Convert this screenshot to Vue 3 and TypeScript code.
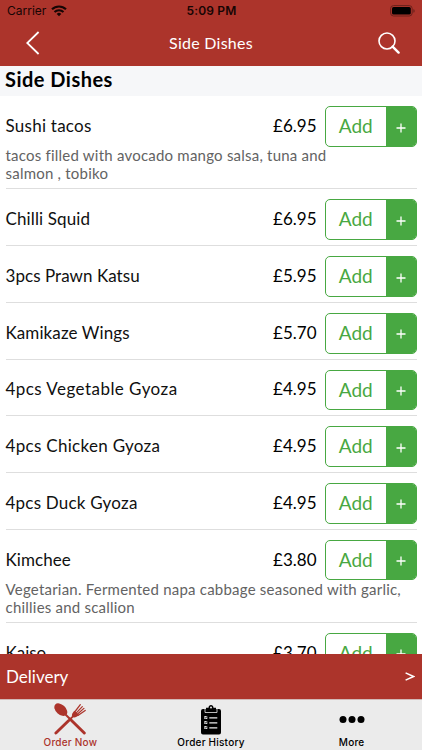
<script setup lang="ts">
interface Dish {
  name: string
  price: string
  tracking: number
  description?: string[]
}

const dishes: Dish[] = [
  { name: 'Sushi tacos', price: '£6.95', tracking: 0.25, description: ['tacos filled with avocado mango salsa, tuna and', 'salmon , tobiko'] },
  { name: 'Chilli Squid', price: '£6.95', tracking: 0.12 },
  { name: '3pcs Prawn Katsu', price: '£5.95', tracking: 0.05 },
  { name: 'Kamikaze Wings', price: '£5.70', tracking: 0.1 },
  { name: '4pcs Vegetable Gyoza', price: '£4.95', tracking: 0.45 },
  { name: '4pcs Chicken Gyoza', price: '£4.95', tracking: 0.3 },
  { name: '4pcs Duck Gyoza', price: '£4.95', tracking: 0.22 },
  { name: 'Kimchee', price: '£3.80', tracking: 0.05, description: ['Vegetarian. Fermented napa cabbage seasoned with garlic,', 'chillies and scallion'] },
  { name: 'Kaiso', price: '£3.70', tracking: 0 },
]
</script>

<template>
  <div class="screen">
    <header class="top">
      <div class="status">
        <div class="carrier">
          <span>Carrier</span>
          <svg width="16" height="12" viewBox="0 0 16 12" fill="none" stroke="#160504">
            <path d="M1 4.3a10 10 0 0 1 14 0" stroke-width="2.1" />
            <path d="M3.5 7a6.4 6.4 0 0 1 9 0" stroke-width="2" />
            <path d="M8 11.3 5.7 8.9a3.3 3.3 0 0 1 4.6 0z" fill="#160504" stroke="none" />
          </svg>
        </div>
        <span class="time">5:09 PM</span>
        <div class="battery">
          <svg width="26" height="12" viewBox="0 0 26 12">
            <rect x="0.6" y="0.6" width="21.6" height="10.4" rx="3" fill="none" stroke="#6b201b" />
            <rect x="2" y="2" width="18.8" height="7.6" rx="1.6" fill="#000" />
            <path d="M23.4 4v3.8q1.3-.5 1.3-1.9T23.4 4z" fill="#6b201b" />
          </svg>
        </div>
      </div>
      <nav class="navbar">
        <button class="icon-btn" aria-label="Back">
          <svg width="14" height="24" viewBox="0 0 14 24" fill="none" stroke="#fff" stroke-width="1.8">
            <path d="M12.6 1 1.2 12l11.4 11" />
          </svg>
        </button>
        <h1>Side Dishes</h1>
        <button class="icon-btn" aria-label="Search">
          <svg width="22" height="22" viewBox="0 0 22 22" fill="none" stroke="#fff">
            <circle cx="9" cy="9" r="8" stroke-width="1.6" />
            <path d="m14.6 14.6 6 6" stroke-width="2.4" stroke-linecap="round" />
          </svg>
        </button>
      </nav>
    </header>

    <h2 class="category">Side Dishes</h2>

    <main class="list">
      <article v-for="dish in dishes" :key="dish.name" class="dish">
        <div class="line">
          <span class="name" :style="{ letterSpacing: dish.tracking + 'px' }">{{ dish.name }}</span>
          <span class="price">{{ dish.price }}</span>
          <button class="add">
            <span class="add-label">Add</span>
            <span class="plus">
              <svg width="10" height="10" viewBox="0 0 10 10" stroke="#fff" stroke-width="1.3">
                <path d="M5 .5v9M.5 5h9" />
              </svg>
            </span>
          </button>
        </div>
        <p v-if="dish.description" class="desc">
          <span v-for="text in dish.description" :key="text">{{ text }}</span>
        </p>
      </article>
    </main>

    <div class="delivery">
      <span>Delivery</span>
      <svg width="10" height="9" viewBox="0 0 10 9" fill="none" stroke="#fff" stroke-width="1.5">
        <path d="M.6.9 8.5 4.5.6 8.1" />
      </svg>
    </div>

    <footer class="tabs">
      <div class="tab active">
        <svg width="32" height="32" viewBox="0 0 32 32" fill="none" stroke="#ac342b" stroke-linecap="round">
          <ellipse cx="6.8" cy="6.6" rx="7.6" ry="4.9" transform="rotate(43 6.8 6.6)" fill="#ac342b" stroke="none" />
          <path d="M11 11 16 16" stroke-width="2" />
          <path d="m16 16 14.3 14" stroke-width="2.9" />
          <path d="M19.5 12.8 14.5 17.8" stroke-width="1.8" />
          <path d="M14.5 17.8 1.9 30" stroke-width="2.9" />
          <path d="M18.2 13.8c-1-2 .3-4 2.2-6l4.5 4.2c-2.2 2-4.5 3.2-6.7 1.8z" fill="#ac342b" stroke="none" />
          <path d="m20.7 9 5.6-7.3M22.1 10.1l6.2-6.500M23.3 11.3l6.6-5.9M24.3 12.3l6.9-4.9" stroke-width="1.25" />
        </svg>
        <span>Order Now</span>
      </div>
      <div class="tab">
        <svg width="20" height="30" viewBox="0 0 20 30">
          <path fill="#000" d="M2 4h3V2.7h2.5C7.6 1 8.6 0 10 0s2.4 1 2.5 2.7H15V4h3a2 2 0 0 1 2 2v21.500a2 2 0 0 1-2 2H2a2 2 0 0 1-2-2V6a2 2 0 0 1 2-2z" />
          <circle cx="10" cy="2.6" r="1" fill="#ebebeb" />
          <path d="M4 4v3.5h12V4" fill="none" stroke="#ebebeb" stroke-width=".8" />
          <path d="M3.3 11h3v3h-3zm0 5h3v3h-3zm0 5h3v3h-3z" fill="#ddd" />
          <path d="m3.8 12.3 1 .8 1.5-2m-2.5 6.2 1 .8 1.5-2m-2.5 6.2 1 .8 1.5-2" fill="none" stroke="#000" stroke-width=".7" />
          <path d="M8.3 12.8h8M8.3 17.8h8M8.3 22.8h8" stroke="#ebebeb" stroke-width="1.2" />
        </svg>
        <span>Order History</span>
      </div>
      <div class="tab">
        <svg width="26" height="30" viewBox="0 0 26 30">
          <circle cx="4" cy="14.5" r="3.5" />
          <circle cx="13" cy="14.5" r="3.5" />
          <circle cx="22" cy="14.5" r="3.5" />
        </svg>
        <span>More</span>
      </div>
    </footer>
  </div>
</template>

<style>
body {
  margin: 0;
}
</style>

<style scoped>
.screen {
  display: flex;
  flex-direction: column;
  width: 422px;
  height: 750px;
  overflow: hidden;
  background: #fff;
  color: #101010;
  font-family: Lato, "Open Sans", sans-serif;
}

.screen * {
  box-sizing: border-box;
}

h1,
h2,
p {
  margin: 0;
}

button {
  margin: 0;
  padding: 0;
  border: 0;
  background: none;
  font: inherit;
}

.top {
  flex: none;
  height: 65.5px;
  background: #ac342b;
}

.status {
  display: grid;
  grid-template-columns: 1fr auto 1fr;
  align-items: center;
  height: 22px;
  padding: 0 6px 0 7px;
  color: #160504;
  font: 12px/22px Inter, sans-serif;
}

.carrier {
  display: flex;
  align-items: center;
  gap: 5px;
}

.time {
  font-weight: 600;
  letter-spacing: 0.15px;
}

.battery {
  display: flex;
  justify-content: flex-end;
}

.navbar {
  display: flex;
  align-items: center;
  justify-content: space-between;
  height: 42px;
  padding: 0 22px 0 26px;
}

.icon-btn,
.icon-btn svg {
  display: block;
}

h1 {
  padding: 0 0 2px 4px;
  color: #fff;
  font-size: 16px;
  font-weight: 400;
  letter-spacing: 0.25px;
}

.category {
  flex: none;
  height: 30.8px;
  padding-left: 5px;
  background: #f6f7f9;
  color: #000;
  font-size: 20px;
  line-height: 27px;
  font-weight: 700;
  letter-spacing: 0.48px;
}

.list {
  flex: 1;
  min-height: 0;
  overflow: hidden;
}

.dish {
  margin: 0 5.5px;
  padding: 10px 0 4.9px;
  border-bottom: 1px solid #dedede;
}

.line {
  display: flex;
  align-items: center;
  height: 40.8px;
}

.name {
  flex: 1;
  padding-bottom: 2px;
  font-size: 17px;
}

.price {
  margin-right: 8.5px;
  padding-bottom: 2px;
  color: #000;
  font-size: 17px;
}

.add {
  display: flex;
  width: 91.5px;
  height: 40.8px;
  overflow: hidden;
  border: 1px solid #48a842;
  border-radius: 5px;
}

.add-label {
  flex: 1;
  color: #48a842;
  font-size: 19px;
  line-height: 38.5px;
}

.plus {
  display: flex;
  align-items: center;
  justify-content: center;
  width: 30px;
  height: 100%;
  padding-top: 2px;
  background: #48a842;
}

.desc {
  display: flex;
  flex-direction: column;
  height: 36.5px;
  color: #636363;
  font-size: 15px;
  line-height: 18px;
  letter-spacing: 0.22px;
  white-space: nowrap;
}

.desc span {
  position: relative;
  top: -0.7px;
}

.delivery {
  display: flex;
  flex: none;
  align-items: center;
  justify-content: space-between;
  height: 45px;
  padding: 0 7px 0 6px;
  background: #ac342b;
  color: #fff;
  font-size: 17px;
}

.tabs {
  display: grid;
  flex: none;
  grid-template-columns: repeat(3, 1fr);
  height: 51.5px;
  border-top: 1px solid #d2b8b6;
  background: #ebebeb;
}

.tab {
  display: flex;
  flex-direction: column;
  align-items: center;
  justify-content: flex-end;
  padding-bottom: 1px;
  color: #000;
  font: 500 10px/14px Inter, sans-serif;
  letter-spacing: 0.22px;
}

.tab.active {
  color: #ac342b;
}
</style>
